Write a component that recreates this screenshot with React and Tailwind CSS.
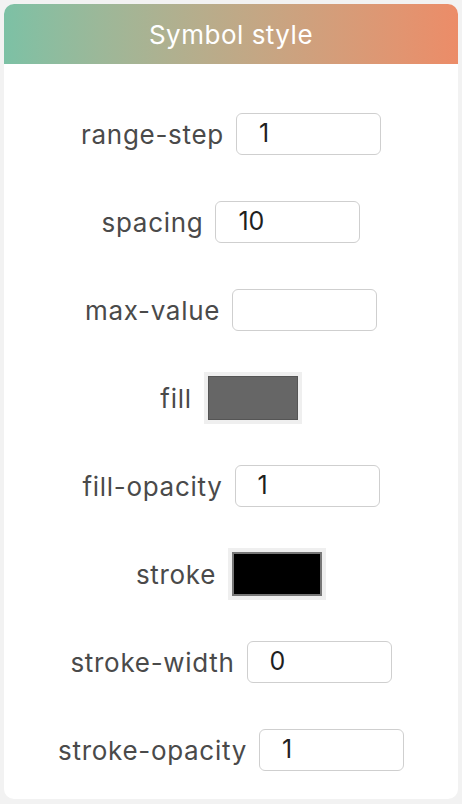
import React from "react";

const TextRow = ({ label, value }) => (
  <div className="flex h-[88px] items-center justify-center gap-3">
    <span className="text-[26px] tracking-[0.7px] text-[#4a4a4a]">{label}</span>
    <div className="flex h-[42px] w-[145px] items-center rounded-[6px] border border-[#cfcfcf] bg-white pl-[22px] text-[25px] text-[#1f1f1f]">
      {value}
    </div>
  </div>
);

const ColorRow = ({ label, color, edge, edgeWidth }) => (
  <div className="flex h-[88px] items-center justify-center gap-3">
    <span className="text-[26px] tracking-[0.7px] text-[#4a4a4a]">{label}</span>
    <div className="h-[52px] w-[98px] bg-[#efefef] p-[4px]">
      <div className={`h-full w-full ${edgeWidth}`} style={{ background: color, borderColor: edge }} />
    </div>
  </div>
);

const App = () => {
  return (
    <div className="min-h-[804px] bg-[#f2f2f2] p-[4px] font-['Inter','Noto_Sans',sans-serif]">
      <div className="h-[795px] w-[454px] overflow-hidden rounded-[10px] bg-white">
        <div className="flex h-[60px] items-center justify-center bg-gradient-to-r from-[#7cc1a5] to-[#ec8c68] text-[26px] tracking-[0.5px] text-white">
          Symbol style
        </div>
        <div className="pt-[26px]">
          <TextRow label="range-step" value="1" />
          <TextRow label="spacing" value="10" />
          <TextRow label="max-value" value="" />
          <ColorRow label="fill" color="#666666" edge="#555555" edgeWidth="border" />
          <TextRow label="fill-opacity" value="1" />
          <ColorRow label="stroke" color="#000000" edge="#777777" edgeWidth="border-[2px]" />
          <TextRow label="stroke-width" value="0" />
          <TextRow label="stroke-opacity" value="1" />
        </div>
      </div>
    </div>
  );
};

export default App;
